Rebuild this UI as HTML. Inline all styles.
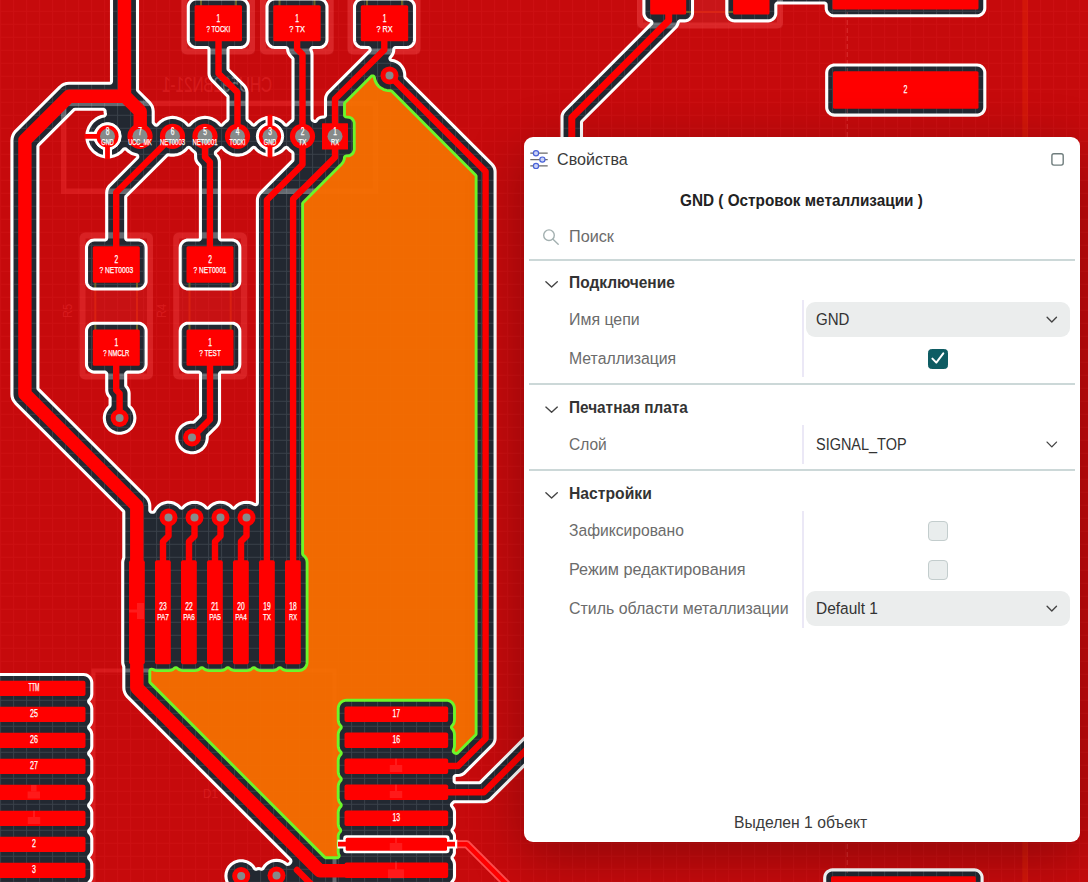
<!DOCTYPE html><html><head><meta charset="utf-8"><title>PCB</title><style>
html,body{margin:0;padding:0}body{width:1088px;height:882px;overflow:hidden;position:relative;background:#c60b0c;font-family:"Liberation Sans",sans-serif}
#panel{position:absolute;left:524px;top:137px;width:556px;height:705px;background:#fff;border-radius:9px;box-shadow:0 14px 56px rgba(0,0,0,.29)}
.t{position:absolute;z-index:2;white-space:nowrap;font-size:16.3px;line-height:20px;height:20px;transform-origin:0 50%}
.sep{position:absolute;left:5px;width:546px;height:2px;background:#ccd8d8}
.vd{position:absolute;left:278px;width:2px;background:#ebe8f6}
.sel{position:absolute;left:282px;width:264px;height:35px;border-radius:9px;background:#ebeded}
.cb{position:absolute;left:404px;width:18px;height:18px;border-radius:4px;background:#e9eded;border:1px solid #c3cdcd}
svg.i{position:absolute;overflow:visible}
</style></head><body>
<svg width="1088" height="882" viewBox="0 0 1088 882" style="position:absolute;left:0;top:0;display:block">
<defs><pattern id="grid" width="13" height="13" patternUnits="userSpaceOnUse" x="0.1" y="10.8"><path d="M0.5,0V13M0,0.5H13" stroke="#394049" stroke-width="1" fill="none"/></pattern><path id="pp" d="M137.0,-30.0 136.3,-29.9 135.7,-29.5 135.3,-28.9 135.1,-28.2 135.2,-27.5 136.5,-25.1 137.2,-22.6 137.5,-20.0 137.5,90.0 138.1,91.0 149.4,102.3 150.9,104.2 152.2,106.4 152.9,108.9 153.2,111.5 153.2,122.4 153.7,123.3 155.2,124.9 156.2,125.2 157.3,124.9 160.5,121.7 163.6,119.6 167.1,118.2 170.7,117.5 172.5,117.4 176.1,117.8 179.8,118.9 183.0,120.6 185.8,122.9 187.5,124.7 188.1,125.1 188.8,125.2 189.8,124.9 193.0,121.7 196.1,119.7 197.8,118.8 201.4,117.8 205.0,117.4 206.9,117.5 208.7,117.8 212.2,118.8 215.5,120.6 218.3,122.9 220.0,124.7 220.6,125.1 221.2,125.2 221.9,125.1 222.5,124.7 224.2,122.9 227.4,120.3 228.0,119.3 228.0,97.1 227.9,96.4 227.4,95.8 211.8,80.1 210.6,78.6 209.8,77.1 209.2,75.3 209.0,73.4 209.0,49.4 208.9,48.7 208.4,48.1 207.5,47.5 196.1,47.5 194.7,47.4 193.2,46.9 191.8,46.2 190.5,45.1 189.6,44.0 188.9,42.8 188.5,41.3 188.3,39.7 188.3,6.8 188.4,5.4 188.9,3.7 189.7,2.4 190.7,1.2 191.8,0.3 193.0,-0.4 194.5,-0.8 196.1,-1.0 240.5,-1.0 242.1,-0.8 243.6,-0.4 244.8,0.3 245.9,1.2 246.9,2.4 247.7,3.9 248.2,5.4 248.3,6.8 248.3,39.7 248.1,41.3 247.7,42.6 247.0,44.0 246.1,45.1 244.9,46.1 243.4,46.9 241.9,47.4 240.5,47.5 229.9,47.5 229.2,47.6 228.3,48.3 228.0,49.4 228.0,68.7 228.1,69.4 228.6,70.0 244.2,85.6 245.4,87.2 246.3,88.9 246.8,90.6 247.0,92.4 247.0,118.9 247.2,119.7 247.6,120.3 249.5,121.7 252.7,124.9 253.4,125.2 254.1,125.2 255.0,124.7 256.7,122.9 259.5,120.6 262.7,118.9 266.4,117.8 270.0,117.4 271.9,117.5 275.5,118.2 278.9,119.6 282.0,121.7 285.0,124.8 285.7,125.1 286.4,125.2 287.5,124.8 289.2,122.9 292.4,120.3 292.8,119.7 293.0,118.9 293.0,58.8 292.4,57.8 290.4,55.8 289.2,54.2 288.4,52.7 287.8,50.9 287.5,48.8 286.9,47.9 285.7,47.5 274.8,47.5 273.2,47.3 271.7,46.9 270.5,46.2 269.4,45.3 268.4,44.1 267.6,42.6 267.1,41.1 267.0,39.7 267.0,6.8 267.1,5.4 267.6,3.9 268.3,2.5 269.2,1.4 270.4,0.4 271.7,-0.4 273.2,-0.8 274.8,-1.0 319.2,-1.0 320.6,-0.9 322.1,-0.4 323.6,0.4 324.8,1.4 325.6,2.4 326.4,3.9 326.9,5.4 327.0,6.8 327.0,39.7 326.9,41.1 326.4,42.6 325.7,44.0 324.8,45.1 323.6,46.1 322.3,46.9 320.8,47.3 319.2,47.5 312.3,47.5 311.7,47.8 311.2,48.3 310.8,49.3 310.9,50.0 311.8,52.5 312.0,54.4 312.0,118.9 312.2,119.7 312.6,120.3 314.1,121.3 314.8,121.5 315.5,121.4 316.1,121.1 317.6,119.1 318.8,118.1 321.1,117.2 324.3,116.9 324.9,116.4 325.4,115.8 325.5,115.1 325.5,99.1 325.7,97.3 326.2,95.6 327.2,93.7 328.3,92.3 369.6,51.1 370.1,50.2 370.1,49.5 369.8,48.5 369.2,47.9 368.5,47.5 360.9,47.4 359.4,46.9 358.0,46.2 356.9,45.3 355.9,44.1 355.1,42.8 354.7,41.3 354.5,39.7 354.5,6.8 354.6,5.4 355.1,3.9 355.9,2.4 356.7,1.4 357.9,0.4 359.2,-0.4 360.7,-0.8 362.3,-1.0 406.7,-1.0 408.1,-0.9 409.8,-0.4 411.1,0.4 412.3,1.4 413.1,2.4 413.9,3.7 414.4,5.4 414.5,6.8 414.5,39.7 414.3,41.3 413.9,42.8 413.2,44.0 412.3,45.1 411.0,46.2 409.6,46.9 408.1,47.4 406.7,47.5 395.7,47.5 394.6,47.8 394.1,48.3 393.8,49.0 393.6,51.6 393.1,53.3 392.1,55.2 390.1,57.7 389.9,58.4 390.1,59.2 390.5,59.8 391.2,60.2 394.0,60.8 396.7,61.9 399.2,63.5 400.4,64.6 402.2,66.9 403.7,69.6 404.5,72.5 404.7,73.9 404.8,76.7 405.3,77.8 492.3,164.7 493.5,166.3 494.4,168.0 494.9,169.7 495.1,171.5 495.1,738.4 494.9,740.3 494.3,742.1 493.4,743.8 492.3,745.1 464.8,772.7 463.2,773.9 461.5,774.8 459.8,775.3 455.6,775.5 454.7,776.1 454.2,776.7 454.1,777.4 454.2,781.5 454.9,782.4 456.0,782.7 479.2,782.7 480.2,782.4 533.2,729.4 534.6,728.3 536.3,727.4 538.2,726.8 539.9,726.6 541.8,726.8 543.7,727.4 545.4,728.3 546.6,729.3 547.8,730.7 548.7,732.4 549.3,734.3 549.5,736.2 549.3,738.0 548.7,739.8 547.8,741.5 546.7,742.9 490.7,798.9 489.3,800.0 487.4,801.0 485.7,801.5 483.9,801.7 454.3,801.7 453.3,802.3 451.7,804.1 451.4,804.8 451.6,805.9 453.0,807.8 453.8,809.2 454.3,810.8 454.5,812.5 454.5,823.9 454.3,825.4 453.8,827.2 453.1,828.4 452.2,829.7 452.0,830.5 452.3,831.6 453.4,832.9 454.0,834.0 454.4,835.2 454.5,836.5 454.4,853.0 454.0,854.2 453.5,855.3 452.1,857.1 452.0,857.9 452.2,858.7 453.1,860.0 453.8,861.2 454.3,863.0 454.5,864.5 454.5,875.9 454.3,877.6 453.8,879.2 453.0,880.6 451.7,882.1 451.4,883.2 451.7,884.3 453.0,885.8 453.8,887.2 454.3,889.0 454.5,890.5 454.5,901.9 454.3,903.6 453.8,905.2 453.0,906.6 451.2,908.6 450.8,909.2 450.8,910.2 451.5,911.5 452.1,911.9 452.8,912.0 823.2,912.0 824.1,911.4 824.6,910.8 824.7,910.1 824.7,877.7 824.9,876.1 825.3,874.6 826.1,873.3 826.9,872.3 828.1,871.3 829.6,870.5 831.1,870.0 832.5,869.9 974.3,869.9 975.7,870.0 977.4,870.5 978.7,871.3 979.7,872.1 980.8,873.4 981.5,874.8 982.0,876.3 982.1,877.7 982.1,910.1 982.2,910.8 982.7,911.4 983.6,912.0 1116.1,912.0 1116.8,911.9 1117.4,911.4 1117.9,910.8 1118.0,910.1 1118.0,-28.1 1117.9,-28.8 1117.4,-29.4 1116.8,-29.9 1116.1,-30.0 981.5,-30.0 980.8,-29.9 980.2,-29.5 979.6,-28.6 979.3,-27.3 979.4,-26.6 980.0,-25.7 982.4,-24.1 983.4,-22.9 984.2,-21.6 984.7,-19.9 984.8,-18.5 984.8,8.0 984.7,9.4 984.2,10.9 983.5,12.3 982.6,13.4 981.3,14.5 979.9,15.2 978.4,15.7 977.0,15.8 834.0,15.8 832.4,15.6 830.9,15.2 829.6,14.4 828.6,13.6 827.6,12.4 826.8,11.1 826.3,9.4 826.1,4.2 825.6,3.6 824.7,3.0 777.7,3.0 777.0,3.1 776.4,3.6 775.8,4.5 775.8,13.1 775.7,14.5 775.2,16.0 774.5,17.4 773.6,18.5 772.4,19.5 771.1,20.3 769.6,20.7 768.0,20.9 734.6,20.9 733.2,20.8 731.7,20.3 730.3,19.6 729.2,18.7 728.2,17.5 727.4,16.2 727.0,14.7 726.8,13.1 726.8,-18.5 726.9,-19.9 727.4,-21.6 728.2,-22.9 729.2,-24.1 731.6,-25.7 732.0,-26.3 732.3,-26.9 732.2,-27.7 732.0,-28.6 731.4,-29.5 730.8,-29.9 730.1,-30.0 689.2,-30.0 688.5,-29.9 687.9,-29.5 687.3,-28.6 687.0,-27.3 687.1,-26.6 687.7,-25.7 690.1,-24.1 691.1,-22.9 691.9,-21.4 692.4,-19.9 692.5,-18.5 692.5,13.1 692.3,14.7 691.9,16.2 691.2,17.4 690.3,18.5 689.1,19.5 687.6,20.3 686.1,20.8 684.7,20.9 679.8,20.9 678.8,21.5 678.4,22.1 677.7,24.3 676.9,25.9 675.6,27.5 582.1,121.0 581.7,121.6 581.5,122.3 581.5,150.0 581.3,152.0 580.8,153.8 579.9,155.4 578.7,156.9 577.3,158.1 575.4,159.1 573.6,159.6 571.7,159.8 569.7,159.6 567.9,159.0 566.4,158.2 564.9,157.0 563.7,155.5 562.7,153.8 562.1,151.8 562.0,150.0 562.0,117.5 562.1,115.6 562.7,113.8 563.6,112.1 564.9,110.5 651.6,23.7 651.9,23.0 651.9,22.3 651.3,21.3 650.7,20.9 648.8,20.3 647.4,19.6 646.3,18.7 645.3,17.5 644.5,16.0 644.0,14.5 643.9,13.1 643.9,-18.5 644.0,-19.9 644.5,-21.4 645.3,-22.9 646.3,-24.1 648.7,-25.7 649.3,-26.6 649.4,-27.3 649.1,-28.6 648.5,-29.5 647.9,-29.9 647.2,-30.0ZM830.1,66.4 831.6,65.6 833.1,65.1 834.5,65.0 977.0,65.0 978.6,65.2 980.1,65.6 981.3,66.3 982.6,67.4 983.5,68.5 984.2,69.7 984.7,71.4 984.8,72.8 984.8,107.3 984.6,108.9 984.2,110.2 983.5,111.6 982.6,112.7 981.4,113.7 979.9,114.5 978.4,115.0 977.0,115.1 834.5,115.1 832.9,114.9 831.4,114.5 830.2,113.8 829.1,112.9 828.1,111.7 827.3,110.2 826.8,108.7 826.7,107.3 826.7,72.8 826.9,71.2 827.3,69.7 828.1,68.4 829.1,67.2ZM75.2,109.2 74.4,109.4 73.8,109.8 38.5,145.2 37.9,146.2 37.9,387.9 38.0,388.7 38.5,389.3 146.0,496.8 147.7,498.9 148.8,501.1 149.6,503.6 149.8,506.0 149.8,510.5 150.1,511.2 150.8,511.9 152.3,512.3 153.1,512.3 153.8,512.1 154.3,511.6 155.8,509.0 156.7,507.8 158.8,505.7 160.0,504.8 161.3,504.0 164.0,502.9 167.0,502.3 168.5,502.2 171.4,502.5 174.3,503.3 177.0,504.8 178.2,505.7 180.4,507.8 181.3,508.2 182.0,508.1 182.6,507.8 184.8,505.7 186.0,504.8 188.6,503.4 191.5,502.5 194.5,502.2 197.5,502.5 200.4,503.4 203.0,504.8 204.2,505.7 206.4,507.8 207.3,508.2 208.0,508.1 208.6,507.8 210.8,505.6 213.3,504.0 216.1,502.8 219.0,502.3 220.5,502.2 223.4,502.5 226.3,503.3 229.0,504.8 230.2,505.7 232.4,507.8 233.3,508.2 234.0,508.1 234.6,507.8 236.8,505.6 239.2,504.0 242.0,502.9 243.6,502.5 246.5,502.2 249.4,502.5 252.3,503.3 254.9,504.6 255.6,504.8 256.3,504.6 257.1,503.9 257.4,502.9 257.4,200.0 257.6,198.2 258.2,196.3 259.1,194.6 260.2,193.2 292.7,160.7 293.0,159.7 293.0,153.7 292.8,152.9 292.4,152.3 289.2,149.7 287.5,147.9 286.9,147.5 286.2,147.4 285.2,147.7 282.0,150.9 278.9,152.9 275.4,154.4 271.8,155.1 268.2,155.1 266.4,154.8 262.7,153.7 259.5,152.0 256.7,149.7 255.0,147.8 253.9,147.4 253.2,147.5 252.5,147.8 249.5,150.9 246.4,153.0 243.0,154.4 239.4,155.1 235.6,155.1 232.1,154.4 230.2,153.7 227.0,152.0 224.2,149.7 222.5,147.8 221.4,147.4 220.7,147.5 220.0,147.8 218.3,149.7 215.8,151.8 215.4,152.4 215.4,153.5 215.6,154.2 217.7,156.5 218.6,158.2 219.2,160.0 219.4,161.9 219.4,238.5 220.0,239.4 220.9,240.0 232.0,240.0 233.4,240.1 234.9,240.6 236.3,241.3 237.6,242.4 238.5,243.5 239.2,244.7 239.7,246.4 239.8,247.8 239.8,281.2 239.6,282.8 239.2,284.3 238.4,285.6 237.4,286.8 236.4,287.6 234.9,288.4 233.4,288.9 232.0,289.0 188.0,289.0 186.6,288.9 185.1,288.4 183.6,287.6 182.6,286.8 181.6,285.6 180.8,284.1 180.3,282.6 180.2,281.2 180.2,247.8 180.4,246.2 180.8,244.7 181.6,243.4 182.6,242.2 183.7,241.3 185.1,240.6 186.6,240.1 188.0,240.0 198.9,240.0 199.8,239.4 200.3,238.8 200.4,238.1 200.4,166.3 199.8,165.3 197.2,162.4 196.2,160.5 195.7,158.8 195.5,153.7 195.1,152.6 191.7,149.7 190.0,147.8 189.3,147.5 188.6,147.4 187.5,147.8 185.8,149.7 183.0,152.0 179.7,153.8 177.9,154.4 174.4,155.1 170.7,155.1 168.3,154.8 167.2,155.1 126.3,196.0 125.8,196.6 125.7,197.3 125.7,238.1 125.8,238.8 126.5,239.7 127.2,240.0 138.3,240.0 139.7,240.1 141.2,240.6 142.6,241.3 143.9,242.4 144.8,243.5 145.5,244.7 145.9,246.2 146.1,247.8 146.1,281.2 146.0,282.6 145.5,284.1 144.7,285.6 143.7,286.8 142.7,287.6 141.4,288.4 139.9,288.8 138.3,289.0 94.3,289.0 92.7,288.8 91.4,288.4 90.0,287.7 88.7,286.6 87.8,285.5 87.1,284.3 86.6,282.6 86.5,281.2 86.5,247.8 86.6,246.4 87.1,244.9 87.8,243.5 88.9,242.2 89.9,241.4 91.2,240.6 92.7,240.2 94.3,240.0 104.8,240.0 105.5,239.9 106.4,239.2 106.7,238.1 106.7,192.6 106.9,190.8 107.4,189.1 108.3,187.4 109.5,185.8 137.3,158.0 137.7,157.4 137.8,156.3 137.6,155.7 137.0,155.1 132.8,153.8 131.1,153.0 128.0,150.9 126.1,149.1 125.1,148.8 124.4,148.8 123.7,149.2 120.7,152.3 117.2,154.6 113.6,156.1 109.6,156.9 105.5,156.9 101.5,156.1 97.8,154.6 94.4,152.3 92.8,150.9 90.3,147.8 89.2,146.0 87.7,142.4 87.2,140.3 86.8,136.3 87.2,132.2 88.4,128.4 89.3,126.5 91.5,123.2 92.9,121.6 96.0,119.1 97.8,118.0 101.4,116.5 104.2,115.9 105.0,115.3 105.4,114.6 105.5,113.9 105.1,112.5 105.1,111.1 104.9,110.4 104.2,109.6 103.2,109.2ZM183.6,324.6 185.1,323.8 186.6,323.3 188.0,323.2 232.0,323.2 233.4,323.3 234.9,323.8 236.3,324.5 237.6,325.6 238.5,326.7 239.2,328.1 239.7,329.6 239.8,331.0 239.8,364.3 239.6,365.9 239.2,367.4 238.4,368.7 237.4,369.9 236.3,370.8 234.9,371.5 233.4,372.0 232.0,372.1 221.0,372.1 220.1,372.7 219.5,373.6 219.5,419.5 219.3,421.3 218.8,423.0 217.9,424.7 216.7,426.3 207.6,435.4 207.3,436.2 207.2,439.0 206.6,442.0 205.5,444.8 203.8,447.2 201.7,449.4 199.2,451.0 196.4,452.2 193.5,452.7 190.5,452.7 187.5,452.1 184.7,451.0 182.3,449.3 180.1,447.2 178.5,444.7 177.3,441.9 176.8,439.0 176.8,436.0 177.4,433.0 178.5,430.2 179.3,429.0 181.1,426.7 183.5,424.8 186.2,423.3 189.1,422.5 190.5,422.3 193.3,422.2 194.1,421.9 199.9,416.1 200.4,415.5 200.5,414.8 200.5,374.0 200.4,373.3 199.9,372.7 199.0,372.1 188.0,372.1 186.6,372.0 185.1,371.5 183.6,370.7 182.6,369.9 181.6,368.7 180.8,367.2 180.3,365.7 180.2,364.3 180.2,331.0 180.4,329.4 180.8,327.9 181.6,326.6 182.6,325.4ZM88.7,325.6 89.9,324.6 91.2,323.8 92.7,323.4 94.3,323.2 138.3,323.2 139.7,323.3 141.2,323.8 142.7,324.6 143.7,325.4 144.7,326.6 145.5,328.1 146.0,329.6 146.1,331.0 146.1,364.3 145.9,365.9 145.5,367.4 144.7,368.7 143.7,369.9 142.6,370.8 141.2,371.5 139.7,372.0 138.3,372.1 127.2,372.1 126.3,372.7 125.7,373.6 125.7,385.6 126.0,386.3 127.5,388.2 128.3,389.7 128.9,391.6 129.1,393.4 129.1,405.5 129.5,406.3 131.4,408.3 132.3,409.5 133.7,412.1 134.6,415.1 134.9,418.0 134.6,420.9 134.2,422.5 133.1,425.2 131.5,427.7 130.4,428.9 128.1,430.7 126.8,431.5 124.1,432.6 121.1,433.2 118.1,433.2 115.2,432.7 112.4,431.5 109.9,429.9 107.8,427.7 106.1,425.3 105.0,422.5 104.6,420.9 104.3,418.0 104.4,416.5 104.9,413.6 105.5,412.1 106.9,409.5 107.8,408.3 109.7,406.3 110.1,405.1 110.1,397.8 109.8,397.1 108.3,395.2 107.5,393.7 106.9,391.8 106.7,390.0 106.7,373.6 106.1,372.7 105.2,372.1 94.3,372.1 92.9,372.0 91.4,371.5 89.9,370.7 88.7,369.7 87.8,368.6 87.1,367.2 86.6,365.7 86.5,364.3 86.5,331.0 86.6,329.6 87.1,328.1 87.8,326.7ZM-30.0,678.1 -29.9,678.8 -29.2,679.7 -27.7,680.2 -26.5,680.2 -25.7,679.6 -24.8,678.1 -23.9,677.0 -22.5,675.9 -21.1,675.1 -19.7,674.7 -18.0,674.5 83.5,674.5 85.2,674.7 86.6,675.1 88.0,675.9 89.4,677.0 90.4,678.3 91.1,679.5 91.6,681.1 91.8,682.8 91.8,694.0 91.6,695.5 91.1,697.3 90.3,698.7 88.8,700.5 88.6,701.6 89.0,702.6 90.4,704.3 91.2,705.7 91.6,707.3 91.8,708.8 91.8,720.0 91.6,721.7 91.1,723.3 90.3,724.7 88.8,726.5 88.6,727.6 89.0,728.6 90.4,730.3 91.2,731.7 91.6,733.3 91.8,734.8 91.8,746.0 91.6,747.7 91.1,749.3 90.3,750.7 88.8,752.5 88.6,753.6 89.0,754.6 90.4,756.3 91.2,757.7 91.6,759.3 91.8,760.8 91.8,772.0 91.6,773.7 91.1,775.3 90.3,776.7 88.8,778.5 88.6,779.6 89.0,780.6 90.4,782.3 91.2,783.7 91.6,785.3 91.8,786.8 91.8,798.0 91.6,799.7 91.1,801.3 90.3,802.7 88.8,804.5 88.6,805.6 89.0,806.6 90.4,808.3 91.2,809.7 91.6,811.3 91.8,812.8 91.8,824.0 91.6,825.7 91.1,827.3 90.3,828.7 88.8,830.5 88.6,831.6 89.0,832.6 90.4,834.3 91.2,835.7 91.6,837.3 91.8,838.8 91.8,850.0 91.6,851.7 91.1,853.3 90.3,854.7 88.8,856.5 88.6,857.6 89.0,858.6 90.4,860.3 91.2,861.7 91.6,863.3 91.8,864.8 91.8,876.0 91.6,877.7 91.1,879.3 90.3,880.7 88.8,882.5 88.6,883.6 89.0,884.6 90.4,886.3 91.2,887.7 91.6,889.3 91.8,890.8 91.8,902.0 91.6,903.7 91.1,905.3 90.3,906.7 88.5,908.6 88.2,909.3 88.2,910.4 89.0,911.6 90.1,912.0 255.9,912.0 256.6,911.9 257.4,911.3 257.9,910.1 257.9,909.1 257.6,908.5 255.9,907.0 255.3,905.4 255.3,888.3 255.0,887.3 254.6,886.8 253.8,886.4 252.6,886.5 249.7,888.7 247.1,890.1 244.2,891.0 241.2,891.3 239.7,891.2 236.7,890.6 234.0,889.5 231.5,887.9 230.3,886.8 228.5,884.5 227.0,881.8 226.2,878.9 225.9,876.0 226.2,873.0 227.1,870.1 228.5,867.5 229.4,866.3 231.5,864.2 234.0,862.5 236.7,861.4 238.2,861.0 239.7,860.8 242.7,860.8 245.7,861.4 247.1,861.9 249.7,863.3 252.1,865.2 253.1,866.3 254.6,868.6 255.2,869.1 256.3,869.2 257.8,868.6 258.8,868.5 261.5,869.2 262.3,869.0 262.9,868.6 264.7,865.9 266.8,863.7 269.3,862.1 272.1,860.9 273.6,860.6 276.5,860.3 279.5,860.6 282.4,861.5 285.0,862.9 286.7,864.2 287.9,864.4 289.0,864.0 290.3,862.8 290.9,861.5 290.8,860.3 290.4,859.7 127.6,696.9 125.9,694.8 124.8,692.6 124.0,690.1 123.8,687.7 123.8,666.8 122.9,664.0 122.7,662.3 122.7,562.3 122.9,560.6 123.8,557.8 123.8,512.2 123.7,511.4 123.2,510.8 15.7,403.3 14.2,401.4 12.9,399.2 12.1,396.5 11.9,394.1 11.9,140.4 12.2,137.7 12.9,135.5 14.0,133.2 15.7,131.1 59.8,87.1 61.9,85.4 64.1,84.2 66.4,83.5 69.0,83.3 109.6,83.2 110.7,82.9 111.2,82.4 111.5,81.3 111.5,-20.0 111.8,-22.6 112.5,-24.9 113.9,-28.0 113.6,-29.1 113.1,-29.6 112.4,-30.0 -28.1,-30.0 -28.8,-29.9 -29.4,-29.4 -30.0,-28.5Z" fill-rule="evenodd" clip-rule="evenodd"/><path id="ip" d="M152.6,669.3 151.6,669.1 150.9,669.3 150.3,669.7 149.8,670.6 149.8,681.5 149.9,682.3 150.4,682.9 324.6,857.1 325.6,857.7 337.7,857.7 338.7,857.1 339.2,856.0 339.1,855.3 338.3,853.2 338.2,851.9 338.2,836.5 338.3,835.2 338.7,834.0 339.3,832.9 340.4,831.6 340.7,830.5 340.5,829.7 339.6,828.4 338.9,827.2 338.4,825.4 338.2,823.9 338.2,812.5 338.4,810.8 338.9,809.2 339.7,807.8 341.0,806.3 341.3,805.2 341.0,804.1 339.7,802.6 338.9,801.2 338.4,799.4 338.2,797.9 338.2,786.5 338.4,784.8 338.9,783.2 339.7,781.8 341.0,780.3 341.3,779.2 341.0,778.1 339.7,776.6 338.9,775.2 338.4,773.4 338.2,771.9 338.2,760.5 338.4,758.8 338.9,757.2 339.7,755.8 341.0,754.3 341.3,753.2 341.0,752.1 339.7,750.6 338.9,749.2 338.4,747.4 338.2,745.9 338.2,734.5 338.4,732.8 338.9,731.2 339.7,729.8 341.0,728.3 341.3,727.2 341.0,726.1 339.7,724.6 338.9,723.2 338.4,721.4 338.2,719.9 338.2,708.5 338.4,706.8 338.9,705.2 339.7,703.8 340.7,702.6 341.8,701.7 343.4,700.8 345.0,700.4 346.5,700.2 446.2,700.2 447.9,700.4 449.3,700.8 450.7,701.6 452.1,702.7 453.1,704.0 453.8,705.2 454.3,707.0 454.5,708.5 454.5,719.9 454.3,721.4 453.8,723.2 453.0,724.6 451.7,726.1 451.4,727.2 451.7,728.3 453.0,729.8 453.8,731.2 454.3,732.8 454.5,734.5 454.5,745.9 454.3,747.6 453.2,750.7 453.3,751.5 453.7,752.1 454.6,752.9 455.7,753.4 456.6,753.5 457.3,753.2 475.5,735.0 476.0,734.4 476.1,733.7 476.1,175.9 475.5,174.9 391.9,91.2 390.8,90.7 388.0,90.6 386.6,90.4 383.7,89.6 381.0,88.1 378.7,86.3 377.6,85.1 376.0,82.6 374.9,79.9 374.3,77.1 373.9,76.4 373.3,76.0 372.1,75.9 371.1,76.4 345.1,102.5 344.5,103.5 344.5,115.1 344.6,115.8 345.1,116.4 345.7,116.9 348.9,117.2 350.2,117.6 351.4,118.2 352.4,119.1 353.2,120.1 353.8,121.3 354.2,122.6 354.3,149.1 354.1,150.5 353.2,152.8 352.2,154.0 350.2,155.3 348.7,155.8 346.0,155.9 344.9,156.5 344.5,157.2 344.3,159.1 343.7,160.9 342.8,162.6 341.7,163.9 303.2,202.5 302.6,203.5 302.6,553.9 302.9,554.9 304.7,556.5 305.7,557.8 306.4,559.0 306.9,560.6 307.1,562.3 307.1,662.3 306.9,663.8 306.5,665.4 305.6,667.0 304.6,668.2 303.5,669.1 301.9,670.0 300.3,670.4 298.8,670.6 287.0,670.6 285.5,670.4 283.7,669.9 282.3,669.1 281.0,668.0 279.9,667.7 278.8,668.0 277.3,669.2 275.9,670.0 274.3,670.4 272.8,670.6 261.0,670.6 259.5,670.4 257.7,669.9 256.3,669.1 255.0,668.0 253.9,667.7 252.8,668.0 251.3,669.2 249.9,670.0 248.3,670.4 246.8,670.6 235.0,670.6 233.5,670.4 231.7,669.9 230.3,669.1 229.0,668.0 227.9,667.7 226.8,668.0 225.3,669.2 223.9,670.0 222.3,670.4 220.8,670.6 209.0,670.6 207.5,670.4 205.7,669.9 204.3,669.1 203.0,668.0 201.9,667.7 200.8,668.0 199.3,669.2 197.9,670.0 196.3,670.4 194.8,670.6 183.0,670.6 181.5,670.4 179.7,669.9 178.3,669.1 177.0,668.0 175.9,667.7 174.8,668.0 173.3,669.2 171.9,670.0 170.3,670.4 168.8,670.6 157.0,670.6 155.3,670.4 153.9,670.0Z" fill-rule="evenodd"/><clipPath id="cp"><use href="#pp"/></clipPath></defs>
<rect width="1088" height="882" fill="#222831"/>
<rect width="1088" height="882" fill="url(#grid)"/>
<g fill="none" stroke="rgba(255,255,255,0.30)" stroke-width="6">
<rect x="63.7" y="103.4" width="311.8" height="87.8" stroke-width="5.4"/>
<rect x="184.3" y="-10" width="67.7" height="61.5" rx="3"/>
<rect x="263" y="-10" width="67.7" height="61.5" rx="3"/>
<rect x="350.5" y="-10" width="67.0" height="61.5" rx="3"/>
<rect x="82.5" y="235.6" width="67.5" height="141" rx="3"/>
<rect x="176.2" y="235.6" width="67.8" height="141" rx="3"/>
<rect x="640" y="-10" width="140" height="35.5" rx="3"/>
<rect x="93.5" y="670.5" width="241" height="250" stroke-width="4"/>
</g>
<g stroke="rgb(105,98,40)" stroke-width="2" fill="none"><path d="M95.3,280V332M137,280V332M189.5,280V332M230.7,280V332M201,0V8M236,0V8M279.5,0V8M314.5,0V8M367,0V8M402,0V8M686,12H733"/></g>
<g fill="rgba(255,255,255,0.3)" font-family="'Liberation Sans',sans-serif"><text transform="translate(272,92) scale(-1,1)" font-size="22" textLength="110" lengthAdjust="spacingAndGlyphs">CHU592BN21-1</text><text transform="translate(72,318) rotate(-90)" font-size="13" textLength="14" lengthAdjust="spacingAndGlyphs">R5</text><text transform="translate(166,318) rotate(-90)" font-size="13" textLength="14" lengthAdjust="spacingAndGlyphs">R4</text><text x="203" y="798" font-size="13" textLength="15" lengthAdjust="spacingAndGlyphs">D1</text></g>
<use href="#pp" fill="rgb(255,0,0)" fill-opacity="0.745"/>
<g clip-path="url(#cp)" fill="#fff" fill-opacity="0.05">
<rect x="181.3" y="-10" width="73.7" height="64.5" rx="4"/>
<rect x="260" y="-10" width="73.7" height="64.5" rx="4"/>
<rect x="347.5" y="-10" width="73.0" height="64.5" rx="4"/>
<rect x="79.5" y="232.6" width="73.5" height="147" rx="4" fill-opacity="0.03"/>
<rect x="173.2" y="232.6" width="73.8" height="147" rx="4" fill-opacity="0.03"/>
<rect x="637" y="-10" width="146" height="38.5" rx="4"/>
</g>
<use href="#ip" fill="#f86c00" fill-opacity="0.97"/>
<path d="M847.3,12V882" stroke="#ff7070" stroke-opacity="0.3" stroke-width="1.2" stroke-dasharray="5 3" fill="none"/>
<rect x="1022.3" y="0" width="5.6" height="882" fill="rgb(255,70,0)" opacity="0.22"/>
<use href="#pp" fill="none" stroke="#fff" stroke-width="3.1" stroke-linejoin="round"/>
<use href="#ip" fill="none" stroke="#6cf62a" stroke-width="2.9" stroke-linejoin="round"/>
<g stroke="#fff" fill="#fff" stroke-linecap="butt">
<circle cx="107.5" cy="136.3" r="13.7"/><circle cx="270.0" cy="136.3" r="13.7"/>
<path d="M107.5,136.3H86.0M107.5,136.3V157.8M270.0,116.30000000000001V156.3" stroke-width="9" fill="none"/>
<rect x="343.2" y="835.2" width="106.3" height="18.0" rx="3" stroke="none"/>
<path d="M337.5,844.2H457.5" stroke-width="8.8" fill="none"/>
</g>
<g fill="none" stroke="#ff0000" stroke-linejoin="round" stroke-linecap="round">
<polyline points="124.5,-20.0 124.5,95.8 140.2,111.5 140.2,136.3" stroke-width="13.4"/>
<polyline points="124.5,96.2 69.0,96.2 24.9,140.3 24.9,394.1 136.8,506.0 136.8,687.7 319.8,870.7 352.0,870.7" stroke-width="13.4"/>
<polyline points="172.5,136.3 116.2,192.6 116.2,252.0" stroke-width="6.4"/>
<polyline points="205.0,136.3 205.0,157.0 209.9,161.9 209.9,252.0" stroke-width="6.4"/>
<polyline points="218.5,36.0 218.5,73.4 237.5,92.4 237.5,136.3" stroke-width="6.4"/>
<polyline points="297.1,36.0 297.1,49.0 302.5,54.4 302.5,136.3 302.5,164.4 266.9,200.0 266.9,566.0" stroke-width="6.4"/>
<polyline points="384.3,36.0 384.3,49.8 335.0,99.1 335.0,136.3 335.0,157.2 293.1,199.1 293.1,566.0" stroke-width="6.4"/>
<polyline points="389.5,75.4 485.6,171.5 485.6,738.4 458.0,766.0 440.0,766.0" stroke-width="6.4"/>
<polyline points="116.2,360.0 116.2,390.0 119.6,393.4 119.6,418.0" stroke-width="6.4"/>
<polyline points="210.0,360.0 210.0,419.5 192.0,437.5" stroke-width="6.4"/>
<polyline points="168.5,517.5 168.5,536.0 163.0,541.5 163.0,566.0" stroke-width="6.4"/>
<polyline points="194.5,517.5 194.5,536.0 189.0,541.5 189.0,566.0" stroke-width="6.4"/>
<polyline points="220.5,517.5 220.5,536.0 215.0,541.5 215.0,566.0" stroke-width="6.4"/>
<polyline points="246.5,517.5 246.5,536.0 241.0,541.5 241.0,566.0" stroke-width="6.4"/>
<polyline points="668.7,8.0 668.7,20.5 571.8,117.5 571.8,150.0" stroke-width="7.0"/>
<polyline points="440.0,792.2 483.9,792.2 540.0,736.1" stroke-width="6.4"/>
<polyline points="297.0,870.0 318.0,891.0" stroke-width="6.4"/>
</g>
<g fill="#ff0000">
<rect x="194.6" y="5.3" width="47.4" height="35.9" rx="1.5"/>
<rect x="273.3" y="5.3" width="47.4" height="35.9" rx="1.5"/>
<rect x="360.8" y="5.3" width="47.4" height="35.9" rx="1.5"/>
<rect x="92.8" y="246.3" width="47.0" height="36.4" rx="1.5"/>
<rect x="92.8" y="329.5" width="47.0" height="36.3" rx="1.5"/>
<rect x="186.5" y="246.3" width="47.0" height="36.4" rx="1.5"/>
<rect x="186.5" y="329.5" width="47.0" height="36.3" rx="1.5"/>
<rect x="129.0" y="560.3" width="15.8" height="104.0" rx="2"/>
<rect x="155.0" y="560.3" width="15.8" height="104.0" rx="2"/>
<rect x="181.0" y="560.3" width="15.8" height="104.0" rx="2"/>
<rect x="207.0" y="560.3" width="15.8" height="104.0" rx="2"/>
<rect x="233.0" y="560.3" width="15.8" height="104.0" rx="2"/>
<rect x="259.0" y="560.3" width="15.8" height="104.0" rx="2"/>
<rect x="285.0" y="560.3" width="15.8" height="104.0" rx="2"/>
<rect x="-20.0" y="680.8" width="105.5" height="15.2" rx="2"/>
<rect x="-20.0" y="706.8" width="105.5" height="15.2" rx="2"/>
<rect x="-20.0" y="732.8" width="105.5" height="15.2" rx="2"/>
<rect x="-20.0" y="758.8" width="105.5" height="15.2" rx="2"/>
<rect x="-20.0" y="784.8" width="105.5" height="15.2" rx="2"/>
<rect x="-20.0" y="810.8" width="105.5" height="15.2" rx="2"/>
<rect x="-20.0" y="836.8" width="105.5" height="15.2" rx="2"/>
<rect x="-20.0" y="862.8" width="105.5" height="15.2" rx="2"/>
<rect x="-20.0" y="888.8" width="105.5" height="15.2" rx="2"/>
<rect x="344.5" y="706.5" width="103.7" height="15.4" rx="2"/>
<rect x="344.5" y="732.5" width="103.7" height="15.4" rx="2"/>
<rect x="344.5" y="758.5" width="103.7" height="15.4" rx="2"/>
<rect x="344.5" y="784.5" width="103.7" height="15.4" rx="2"/>
<rect x="344.5" y="810.5" width="103.7" height="15.4" rx="2"/>
<rect x="344.5" y="862.5" width="103.7" height="15.4" rx="2"/>
<rect x="344.5" y="888.5" width="103.7" height="15.4" rx="2"/>
<rect x="650.2" y="-20.0" width="36.0" height="34.6" rx="1.5"/>
<rect x="733.1" y="-20.0" width="36.4" height="34.6" rx="1.5"/>
<rect x="832.5" y="-20.0" width="146.0" height="29.5" rx="1.5"/>
<rect x="833.0" y="71.3" width="145.5" height="37.5" rx="1.5"/>
<rect x="831.0" y="876.2" width="144.8" height="43.8" rx="1.5"/>
<rect x="322.0" y="123.3" width="26.0" height="26.3" rx="0.5"/>
<circle cx="140.0" cy="136.3" r="12.6"/>
<circle cx="172.5" cy="136.3" r="12.6"/>
<circle cx="205.0" cy="136.3" r="12.6"/>
<circle cx="237.5" cy="136.3" r="12.6"/>
<circle cx="302.5" cy="136.3" r="12.6"/>
<circle cx="389.5" cy="75.4" r="9.0"/>
<circle cx="119.6" cy="418.0" r="9.0"/>
<circle cx="192.0" cy="437.5" r="9.0"/>
<circle cx="241.2" cy="876.0" r="9.0"/>
<circle cx="276.5" cy="875.6" r="9.0"/>
<circle cx="168.5" cy="517.5" r="9.0"/>
<circle cx="194.5" cy="517.5" r="9.0"/>
<circle cx="220.5" cy="517.5" r="9.0"/>
<circle cx="246.5" cy="517.5" r="9.0"/>
<circle cx="107.5" cy="136.3" r="11.1"/><circle cx="270.0" cy="136.3" r="11.1"/>
<rect x="345.7" y="837.7" width="101.3" height="13.0" rx="1.5"/>
</g>
<path d="M107.5,136.3H84.5M107.5,136.3V159.3M270.0,114.80000000000001V157.8M338,844.2H455" stroke="#ff0000" stroke-width="4.8" fill="none"/>
<g fill="none" stroke-linejoin="round"><polyline points="457.6,844.2 466.7,844.2 522,899.5" stroke="#ff4d4d" stroke-width="8"/><polyline points="457.6,844.2 466.7,844.2 522,899.5" stroke="#ff0000" stroke-width="4.4"/></g>
<g fill="#868a8a">
<circle cx="389.5" cy="75.4" r="4.0"/>
<circle cx="119.6" cy="418.0" r="4.0"/>
<circle cx="192.0" cy="437.5" r="4.0"/>
<circle cx="241.2" cy="876.0" r="4.0"/>
<circle cx="276.5" cy="875.6" r="4.0"/>
<circle cx="168.5" cy="517.5" r="4.0"/>
<circle cx="194.5" cy="517.5" r="4.0"/>
<circle cx="220.5" cy="517.5" r="4.0"/>
<circle cx="246.5" cy="517.5" r="4.0"/>
<circle cx="335.0" cy="136.3" r="7.5"/>
<circle cx="302.5" cy="136.3" r="7.5"/>
<circle cx="270.0" cy="136.3" r="7.5"/>
<circle cx="237.5" cy="136.3" r="7.5"/>
<circle cx="205.0" cy="136.3" r="7.5"/>
<circle cx="172.5" cy="136.3" r="7.5"/>
<circle cx="140.0" cy="136.3" r="7.5"/>
<circle cx="107.5" cy="136.3" r="7.5"/>
</g>
<g fill="#fff" opacity="0.1">
<rect x="31.049999999999997" y="785.0" width="5.5" height="6.5"/><rect x="27.599999999999998" y="791.5" width="12.4" height="7"/>
<rect x="33.0" y="810.5" width="2" height="6.5"/><rect x="27.8" y="817.0" width="12.4" height="7.0"/>
<rect x="395.0" y="758.5" width="2" height="6.5"/><rect x="389.8" y="765.0" width="12.4" height="7.0"/>
<rect x="395.0" y="784.5" width="2" height="6.5"/><rect x="389.8" y="791.0" width="12.4" height="7.0"/>
<rect x="395.0" y="836.5" width="2" height="6.5"/><rect x="389.8" y="843.0" width="12.4" height="7.0"/>
<rect x="395.0" y="860.95" width="2" height="8.450000000000001"/><rect x="387.94" y="869.4" width="16.12" height="9.1"/>
<rect x="129" y="609.5" width="8" height="3"/><rect x="137" y="603" width="7" height="16"/>
</g>
<g fill="#fff" stroke="#fff" stroke-width="0.25" font-family="'Liberation Sans',sans-serif" text-anchor="middle">
<text x="218.3" y="21.5" font-size="10" textLength="3.7" lengthAdjust="spacingAndGlyphs">1</text>
<text x="218.3" y="31.6" font-size="9.3" textLength="23.7" lengthAdjust="spacingAndGlyphs">? TOCKI</text>
<text x="297.1" y="21.5" font-size="10" textLength="3.7" lengthAdjust="spacingAndGlyphs">1</text>
<text x="297.1" y="31.6" font-size="9.3" textLength="15.5" lengthAdjust="spacingAndGlyphs">? TX</text>
<text x="384.5" y="21.5" font-size="10" textLength="3.7" lengthAdjust="spacingAndGlyphs">1</text>
<text x="384.5" y="31.6" font-size="9.3" textLength="16" lengthAdjust="spacingAndGlyphs">? RX</text>
<text x="116.3" y="262.7" font-size="10" textLength="3.7" lengthAdjust="spacingAndGlyphs">2</text>
<text x="116.3" y="272.8" font-size="9.3" textLength="33.7" lengthAdjust="spacingAndGlyphs">? NET0003</text>
<text x="210.0" y="262.7" font-size="10" textLength="3.7" lengthAdjust="spacingAndGlyphs">2</text>
<text x="210.0" y="272.8" font-size="9.3" textLength="33" lengthAdjust="spacingAndGlyphs">? NET0001</text>
<text x="116.3" y="345.8" font-size="10" textLength="3.7" lengthAdjust="spacingAndGlyphs">1</text>
<text x="116.3" y="355.9" font-size="9.3" textLength="26.2" lengthAdjust="spacingAndGlyphs">? NMCLR</text>
<text x="210.0" y="345.8" font-size="10" textLength="3.7" lengthAdjust="spacingAndGlyphs">1</text>
<text x="210.0" y="355.9" font-size="9.3" textLength="21.7" lengthAdjust="spacingAndGlyphs">? TEST</text>
<text x="107.5" y="134.8" font-size="10" textLength="3.7" lengthAdjust="spacingAndGlyphs">8</text>
<text x="107.5" y="144.5" font-size="9.3" textLength="12.4" lengthAdjust="spacingAndGlyphs">GND</text>
<text x="140.0" y="134.8" font-size="10" textLength="3.7" lengthAdjust="spacingAndGlyphs">7</text>
<text x="140.0" y="144.5" font-size="9.3" textLength="23.4" lengthAdjust="spacingAndGlyphs">UCC_MK</text>
<text x="172.5" y="134.8" font-size="10" textLength="3.7" lengthAdjust="spacingAndGlyphs">6</text>
<text x="172.5" y="144.5" font-size="9.3" textLength="25" lengthAdjust="spacingAndGlyphs">NET0003</text>
<text x="205.0" y="134.8" font-size="10" textLength="3.7" lengthAdjust="spacingAndGlyphs">5</text>
<text x="205.0" y="144.5" font-size="9.3" textLength="25" lengthAdjust="spacingAndGlyphs">NET0001</text>
<text x="237.5" y="134.8" font-size="10" textLength="3.7" lengthAdjust="spacingAndGlyphs">4</text>
<text x="237.5" y="144.5" font-size="9.3" textLength="15.9" lengthAdjust="spacingAndGlyphs">TOCKI</text>
<text x="270.0" y="134.8" font-size="10" textLength="3.7" lengthAdjust="spacingAndGlyphs">3</text>
<text x="270.0" y="144.5" font-size="9.3" textLength="12.4" lengthAdjust="spacingAndGlyphs">GND</text>
<text x="302.5" y="134.8" font-size="10" textLength="3.7" lengthAdjust="spacingAndGlyphs">2</text>
<text x="302.5" y="144.5" font-size="9.3" textLength="8" lengthAdjust="spacingAndGlyphs">TX</text>
<text x="335.0" y="134.8" font-size="10" textLength="3.7" lengthAdjust="spacingAndGlyphs">1</text>
<text x="335.0" y="144.5" font-size="9.3" textLength="8" lengthAdjust="spacingAndGlyphs">RX</text>
<text x="163.0" y="609.8" font-size="10" textLength="7.4" lengthAdjust="spacingAndGlyphs">23</text>
<text x="163.0" y="620.0" font-size="9.3" textLength="11.7" lengthAdjust="spacingAndGlyphs">PA7</text>
<text x="189.0" y="609.8" font-size="10" textLength="7.4" lengthAdjust="spacingAndGlyphs">22</text>
<text x="189.0" y="620.0" font-size="9.3" textLength="11.7" lengthAdjust="spacingAndGlyphs">PA6</text>
<text x="215.0" y="609.8" font-size="10" textLength="7.4" lengthAdjust="spacingAndGlyphs">21</text>
<text x="215.0" y="620.0" font-size="9.3" textLength="11.7" lengthAdjust="spacingAndGlyphs">PA5</text>
<text x="241.0" y="609.8" font-size="10" textLength="7.4" lengthAdjust="spacingAndGlyphs">20</text>
<text x="241.0" y="620.0" font-size="9.3" textLength="11.7" lengthAdjust="spacingAndGlyphs">PA4</text>
<text x="267.0" y="609.8" font-size="10" textLength="7.4" lengthAdjust="spacingAndGlyphs">19</text>
<text x="267.0" y="620.0" font-size="9.3" textLength="8" lengthAdjust="spacingAndGlyphs">TX</text>
<text x="293.0" y="609.8" font-size="10" textLength="7.4" lengthAdjust="spacingAndGlyphs">18</text>
<text x="293.0" y="620.0" font-size="9.3" textLength="8" lengthAdjust="spacingAndGlyphs">RX</text>
<text x="33.9" y="690.8" font-size="10.2" textLength="10.8" lengthAdjust="spacingAndGlyphs">TTM</text>
<text x="33.9" y="716.8" font-size="10.2" textLength="7.9" lengthAdjust="spacingAndGlyphs">25</text>
<text x="33.9" y="742.8" font-size="10.2" textLength="7.9" lengthAdjust="spacingAndGlyphs">26</text>
<text x="33.9" y="768.8" font-size="10.2" textLength="7.9" lengthAdjust="spacingAndGlyphs">27</text>
<text x="33.9" y="846.8" font-size="10.2" textLength="3.9" lengthAdjust="spacingAndGlyphs">2</text>
<text x="33.9" y="872.8" font-size="10.2" textLength="3.9" lengthAdjust="spacingAndGlyphs">3</text>
<text x="396.3" y="716.6" font-size="10.2" textLength="7.7" lengthAdjust="spacingAndGlyphs">17</text>
<text x="396.3" y="742.6" font-size="10.2" textLength="7.7" lengthAdjust="spacingAndGlyphs">16</text>
<text x="396.3" y="820.6" font-size="10.2" textLength="7.7" lengthAdjust="spacingAndGlyphs">13</text>
<text x="905.5" y="92.6" font-size="10.2" textLength="3.9" lengthAdjust="spacingAndGlyphs">2</text>
</g>
</svg>
<div id="panel">
<div class="t" style="left:32.7px;top:12.15px;font-weight:400;color:#3a3a3a;transform:scaleX(0.9890)">Свойства</div>
<div class="t" style="left:155.8px;top:52.55px;font-weight:700;color:#222;transform:scaleX(0.9406)">GND ( Островок металлизации )</div>
<div class="t" style="left:45.0px;top:89.35px;font-weight:400;color:#6b6b6b;transform:scaleX(0.9960)">Поиск</div>
<div class="t" style="left:45.0px;top:134.95px;font-weight:700;color:#333;transform:scaleX(0.9525)">Подключение</div>
<div class="t" style="left:45.0px;top:171.75px;font-weight:400;color:#6b6b6b;transform:scaleX(0.9775)">Имя цепи</div>
<div class="t" style="left:45.0px;top:210.75px;font-weight:400;color:#6b6b6b;transform:scaleX(0.9704)">Металлизация</div>
<div class="t" style="left:45.0px;top:260.15px;font-weight:700;color:#333;transform:scaleX(0.9425)">Печатная плата</div>
<div class="t" style="left:45.0px;top:296.95px;font-weight:400;color:#6b6b6b;transform:scaleX(0.9534)">Слой</div>
<div class="t" style="left:45.0px;top:345.85px;font-weight:700;color:#333;transform:scaleX(0.9640)">Настройки</div>
<div class="t" style="left:45.0px;top:382.95px;font-weight:400;color:#6b6b6b;transform:scaleX(0.9604)">Зафиксировано</div>
<div class="t" style="left:45.0px;top:421.95px;font-weight:400;color:#6b6b6b;transform:scaleX(0.9953)">Режим редактирования</div>
<div class="t" style="left:45.0px;top:460.65px;font-weight:400;color:#6b6b6b;transform:scaleX(0.9783)">Стиль области металлизации</div>
<div class="t" style="left:291.9px;top:172.25px;font-weight:400;color:#333;transform:scaleX(0.9246)">GND</div>
<div class="t" style="left:291.9px;top:297.35px;font-weight:400;color:#333;transform:scaleX(0.8885)">SIGNAL_TOP</div>
<div class="t" style="left:291.9px;top:461.15px;font-weight:400;color:#333;transform:scaleX(0.9502)">Default 1</div>
<div class="t" style="left:210.4px;top:675.05px;font-weight:400;color:#3a3a3a;transform:scaleX(0.9644)">Выделен 1 объект</div>
<div class="sep" style="top:121.5px"></div>
<div class="sep" style="top:246.0px"></div>
<div class="sep" style="top:332.2px"></div>
<div class="vd" style="top:163.0px;height:77.2px"></div>
<div class="vd" style="top:288.2px;height:38.6px"></div>
<div class="vd" style="top:374.3px;height:116.7px"></div>
<div class="sel" style="top:165.1px"></div><div class="sel" style="top:454.2px"></div>
<div class="cb" style="top:384.2px"></div><div class="cb" style="top:423.1px"></div>
<div class="cb" style="top:212px;background:#0e5c63;border-color:#0e5c63;border-radius:3.5px"></div>
<svg class="i" style="left:-524px;top:-137px" width="1088" height="882" viewBox="0 0 1088 882" fill="none">
<g stroke="#6a6a6a" stroke-width="1.3"><path d="M530.3,153.2H547.7M530.3,159.6H547.7M530.3,165.9H547.7"/></g>
<g stroke="#4a63d8" stroke-width="1.2" fill="#ccd4f7"><circle cx="536" cy="153.2" r="2.6"/><circle cx="542.4" cy="159.6" r="2.6"/><circle cx="536" cy="165.9" r="2.6"/></g>
<rect x="1051.9" y="153.8" width="11.3" height="11.3" rx="2" stroke="#6f7d7d" stroke-width="1.4"/>
<g stroke="#a3b0b0" stroke-width="1.4" stroke-linecap="round"><circle cx="549" cy="235.2" r="5.3"/><path d="M553,239.3L558.2,244.2"/></g>
<path d="M545.9,281.8L551.6,287.0L557.3,281.8" stroke="#444" stroke-width="1.4" stroke-linecap="round" stroke-linejoin="round"/>
<path d="M545.9,407.1L551.6,412.3L557.3,407.1" stroke="#444" stroke-width="1.4" stroke-linecap="round" stroke-linejoin="round"/>
<path d="M545.9,492.8L551.6,498.0L557.3,492.8" stroke="#444" stroke-width="1.4" stroke-linecap="round" stroke-linejoin="round"/>
<path d="M1047.1,317.2L1051.8,322.0L1056.5,317.2" stroke="#444" stroke-width="1.35" stroke-linecap="round" stroke-linejoin="round"/>
<path d="M1047.1,442.1L1051.8,446.9L1056.5,442.1" stroke="#444" stroke-width="1.35" stroke-linecap="round" stroke-linejoin="round"/>
<path d="M1047.1,606.2L1051.8,611.0L1056.5,606.2" stroke="#444" stroke-width="1.35" stroke-linecap="round" stroke-linejoin="round"/>
<path d="M932.4,358.6L936.3,362.6L943.3,353.3" stroke="#fff" stroke-width="2" stroke-linecap="round" stroke-linejoin="round"/>
</svg>
</div></body></html>
